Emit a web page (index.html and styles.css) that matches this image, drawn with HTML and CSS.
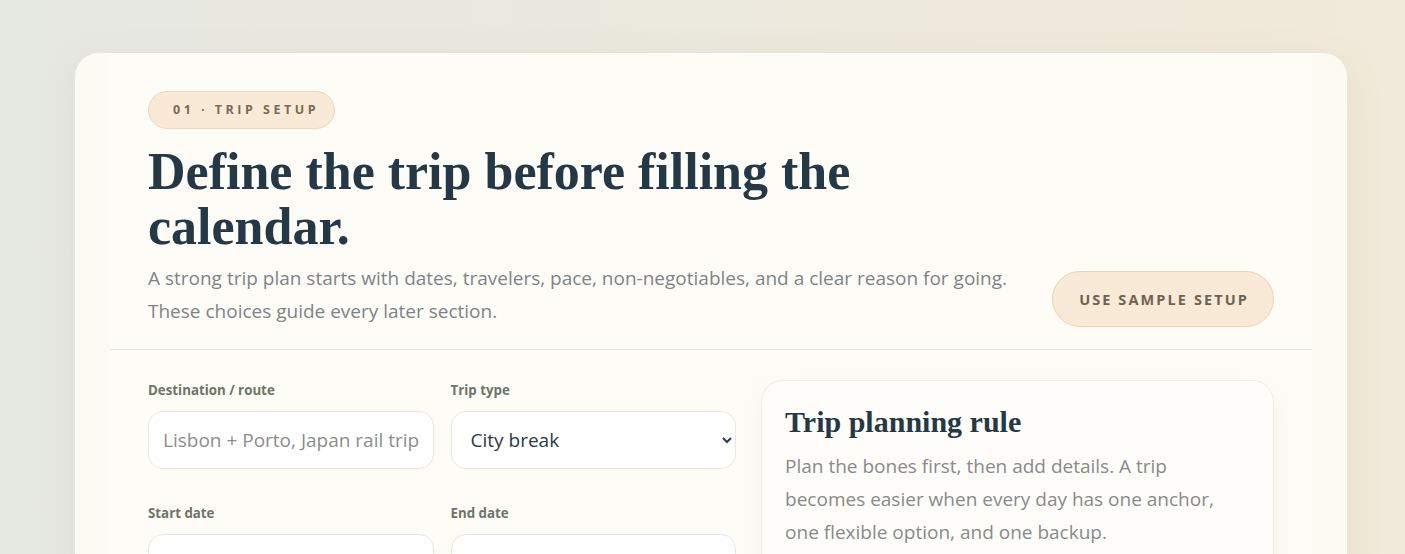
FILE: index.html
```html
<!DOCTYPE html>
<html lang="en">
<head>
  <meta charset="UTF-8" />
  <meta name="viewport" content="width=device-width, initial-scale=1" />
  <title>Trip setup</title>
  <link rel="stylesheet" href="styles.css">
</head>
<body>
  <div class="page">
    <div class="panel">
      <div class="section">
        <div class="section-head">
          <div class="head-text">
            <span class="step-badge">01 · Trip setup</span>
            <h1>Define the trip before filling the calendar.</h1>
            <p>A strong trip plan starts with dates, travelers, pace, non-negotiables, and a clear reason for going. These choices guide every later section.</p>
          </div>
          <button class="sample-button">Use sample setup</button>
        </div>

        <div class="section-body">
          <div class="form-grid">
            <div class="field">
              <label for="destination">Destination / route</label>
              <input type="text" id="destination" placeholder="Lisbon + Porto, Japan rail trip">
            </div>
            <div class="field">
              <label for="tripType">Trip type</label>
              <select id="tripType">
                <option>City break</option>
                <option>Road trip</option>
                <option>Beach week</option>
                <option>Rail journey</option>
              </select>
            </div>
            <div class="field">
              <label for="startDate">Start date</label>
              <input type="text" id="startDate">
            </div>
            <div class="field">
              <label for="endDate">End date</label>
              <input type="text" id="endDate">
            </div>
          </div>

          <div class="rule-card">
            <h2>Trip planning rule</h2>
            <p>Plan the bones first, then add details. A trip becomes easier when every day has one anchor, one flexible option, and one backup.</p>
          </div>
        </div>
      </div>
    </div>
  </div>
</body>
</html>
```

FILE: styles.css
```css
body {
  margin: 0;
  height: 554px;
  overflow: hidden;
  background: linear-gradient(to right, #e6e8e2, #f1e9d9);
  font-family: "Open Sans", "Noto Sans", sans-serif;
  color: #253846;
}

.page {
  padding: 53px 58px 0 75px;
}

.panel {
  background-color: #fbfaf3;
  border-radius: 24px;
  padding: 0 35px;
  box-shadow: 0 10px 40px rgba(120, 110, 80, 0.08);
  min-height: 600px;
}

.section {
  background-color: #fdfcf7;
  min-height: 600px;
}

.section-head {
  display: flex;
  justify-content: space-between;
  align-items: flex-end;
  padding: 38px 38px 21px;
  border-bottom: 1px solid #ece8dd;
}

.head-text {
  max-width: 880px;
}

.step-badge {
  display: inline-block;
  height: 36px;
  line-height: 36px;
  padding: 0 15px 0 24px;
  border-radius: 999px;
  background-color: #f8ead6;
  border: 1px solid #efd8b9;
  color: #7a6a54;
  font-size: 12.5px;
  font-weight: 700;
  letter-spacing: 3.5px;
  text-transform: uppercase;
}

h1 {
  margin: 15px 0 0;
  max-width: 760px;
  font-family: "Liberation Serif", serif;
  font-size: 52px;
  line-height: 55px;
  font-weight: 700;
  color: #253846;
}

.head-text p {
  margin: 8px 0 0;
  font-size: 19px;
  line-height: 33px;
  color: #7f8486;
}

.sample-button {
  height: 56px;
  padding: 0 24px 0 26px;
  margin-bottom: 1px;
  border-radius: 999px;
  background-color: #f8ead6;
  border: 1px solid #efd3ad;
  color: #6e6352;
  font-family: "Open Sans", "Noto Sans", sans-serif;
  font-size: 14.5px;
  font-weight: 700;
  letter-spacing: 2.1px;
  text-transform: uppercase;
  cursor: pointer;
}

.section-body {
  display: grid;
  grid-template-columns: minmax(0, 587fr) minmax(0, 512fr);
  gap: 25px;
  padding: 30px 38px;
}

.form-grid {
  display: grid;
  grid-template-columns: 1fr 1fr;
  column-gap: 17px;
  row-gap: 36px;
  padding-top: 2px;
}

.field label {
  display: block;
  margin-bottom: 13px;
  font-size: 13.3px;
  line-height: 16px;
  font-weight: 700;
  color: #6d7568;
}

.field input,
.field select {
  box-sizing: border-box;
  width: 100%;
  height: 58px;
  border: 1px solid #ebe7df;
  border-radius: 15px;
  background-color: #fff;
  font-family: "Open Sans", "Noto Sans", sans-serif;
  font-size: 19px;
  color: #2b3a45;
}

.field input {
  padding: 0 14px;
}

.field input::placeholder {
  color: #8b8e8d;
}

.field select {
  padding: 0 10px 0 15px;
}

.rule-card {
  background-color: #fefdfa;
  border: 1px solid #f0ece3;
  border-radius: 22px;
  padding: 22px 23px;
  box-shadow: 0 8px 24px rgba(110, 100, 70, 0.07);
}

.rule-card h2 {
  margin: 0;
  font-family: "Liberation Serif", serif;
  font-size: 30px;
  line-height: 38px;
  font-weight: 700;
  color: #253846;
}

.rule-card p {
  margin: 9px 0 0;
  font-size: 19px;
  line-height: 33px;
  color: #878b89;
}
```
